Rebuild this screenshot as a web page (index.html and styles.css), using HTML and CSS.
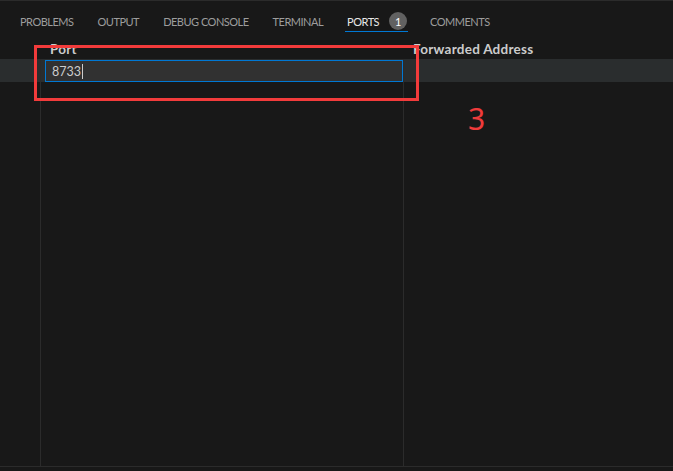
FILE: index.html
```html
<!DOCTYPE html>
<html>
<head>
<meta charset="utf-8">
<link rel="stylesheet" href="styles.css">
</head>
<body>
<div class="panel">
  <div class="tabs">
    <div class="tab">PROBLEMS</div>
    <div class="tab">OUTPUT</div>
    <div class="tab">DEBUG CONSOLE</div>
    <div class="tab">TERMINAL</div>
    <div class="tab active"><span>PORTS</span><span class="badge">1</span></div>
    <div class="tab">COMMENTS</div>
  </div>
  <div class="table">
    <div class="col c0">
      <div class="hcell"></div>
      <div class="body"><div class="row"></div></div>
    </div>
    <div class="col c1">
      <div class="hcell">Port</div>
      <div class="body"><div class="row"><div class="input">8733<span class="caret"></span></div></div></div>
    </div>
    <div class="col c2">
      <div class="hcell">Forwarded Address</div>
      <div class="body"><div class="row"></div></div>
    </div>
  </div>
  <div class="foot"></div>
  <div class="annot-box"></div>
  <div class="annot-num">3</div>
</div>
</body>
</html>
```
FILE: styles.css
```css
* { box-sizing: border-box; }
html, body { margin: 0; padding: 0; background: #181818; }
body { font-family: Lato, "Open Sans", sans-serif; color: #cccccc; }

.panel {
  position: relative;
  height: 471px;
  display: flex;
  flex-direction: column;
  overflow: hidden;
}

.tabs {
  flex: 0 0 35px;
  border-top: 1px solid #2b2b2b;
  display: flex;
  align-items: flex-start;
  padding: 10px 0 0 18px;
  gap: 20px;
}
.tab {
  height: 21px;
  padding: 0 2px;
  display: flex;
  align-items: center;
  font-size: 11px;
  letter-spacing: -0.5px;
  color: #9d9d9d;
  border-bottom: 1px solid transparent;
  white-space: nowrap;
}
.tab.active {
  color: #e7e7e7;
  border-bottom-color: #0078d4;
  padding-right: 1px;
}
.badge {
  margin-left: 10px;
  width: 18px;
  height: 18px;
  border-radius: 50%;
  background: #616161;
  color: #ffffff;
  display: flex;
  align-items: center;
  justify-content: center;
  font-size: 11px;
  letter-spacing: 0;
}

.table {
  flex: 1;
  display: flex;
}
.col { display: flex; flex-direction: column; }
.c0 { width: 41px; }
.c1 { width: 363px; }
.c2 { flex: 1; }

.hcell {
  height: 24px;
  padding: 4px 0 0 9px;
  line-height: 20px;
  font-size: 13.5px;
  letter-spacing: 0.25px;
  font-weight: bold;
  color: #cccccc;
  white-space: nowrap;
}

.body { flex: 1; }
.c0 .body, .c1 .body { border-right: 1px solid #2b2b2b; }

.row {
  height: 23px;
  background: #2a2d2e;
}
.c1 .row { padding: 1px 0 0 4px; }

.input {
  height: 22px;
  border: 1px solid #0078d4;
  background: #313131;
  padding-left: 6px;
  display: flex;
  align-items: center;
  font-size: 12.5px;
  color: #cccccc;
}
.caret {
  display: inline-block;
  width: 1px;
  height: 15px;
  margin-left: 1px;
  background: #cccccc;
}

.foot {
  flex: 0 0 5px;
  border-top: 1px solid #2b2b2b;
}

.annot-box {
  position: absolute;
  left: 34px;
  top: 45px;
  width: 385px;
  height: 56px;
  border: 3px solid #f23b3b;
}
.annot-num {
  position: absolute;
  left: 468px;
  top: 104px;
  font-family: "Noto Sans", sans-serif;
  font-size: 30px;
  line-height: 30px;
  color: #ef3b3b;
}
```
